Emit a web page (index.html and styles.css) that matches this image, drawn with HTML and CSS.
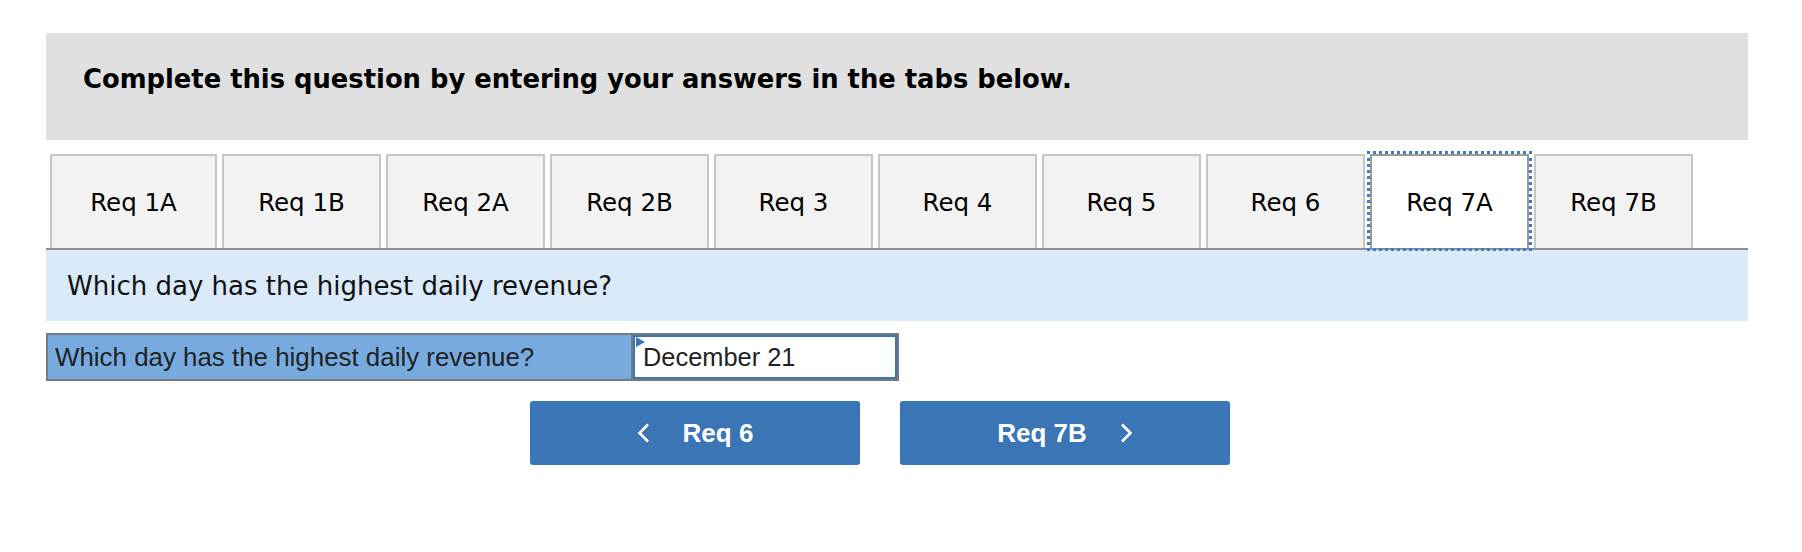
FILE: index.html
```html
<!DOCTYPE html>
<html lang="en">
<head>
    <meta charset="UTF-8">
    <meta name="viewport" content="width=device-width, initial-scale=1.0">
    <title>Req 7A</title>
    <link rel="stylesheet" href="styles.css">
</head>
<body>
    <div class="question-wrap">
        <div class="instructions">
            <strong>Complete this question by entering your answers in the tabs below.</strong>
        </div>

        <div class="tabs" role="tablist">
            <button class="tab" role="tab">Req 1A</button>
            <button class="tab" role="tab">Req 1B</button>
            <button class="tab" role="tab">Req 2A</button>
            <button class="tab" role="tab">Req 2B</button>
            <button class="tab" role="tab">Req 3</button>
            <button class="tab" role="tab">Req 4</button>
            <button class="tab" role="tab">Req 5</button>
            <button class="tab" role="tab">Req 6</button>
            <button class="tab active" role="tab" aria-selected="true">Req 7A</button>
            <button class="tab" role="tab">Req 7B</button>
        </div>

        <div class="tab-panel" role="tabpanel">
            <div class="prompt">Which day has the highest daily revenue?</div>

            <div class="answer-row">
                <div class="answer-label">Which day has the highest daily revenue?</div>
                <div class="answer-cell">December 21</div>
            </div>

            <div class="nav-buttons">
                <button class="nav-btn" aria-label="Go to Req 6">
                    <svg class="chevron" width="13" height="20" viewBox="0 0 13 20">
                        <polyline points="11,1.5 2.5,10 11,18.5" />
                    </svg>
                    <span>Req 6</span>
                </button>
                <button class="nav-btn" aria-label="Go to Req 7B">
                    <span>Req 7B</span>
                    <svg class="chevron" width="13" height="20" viewBox="0 0 13 20">
                        <polyline points="2,1.5 10.5,10 2,18.5" />
                    </svg>
                </button>
            </div>
        </div>
    </div>
</body>
</html>
```

FILE: styles.css
```css
:root {
    --header-gray: #e0e0e0;
    --tab-bg: #f2f2f2;
    --tab-border: #c6c6c6;
    --rule-color: #8f8f8f;
    --panel-blue: #daeaf8;
    --label-blue: #77abe0;
    --button-blue: #3a75b6;
    --focus-blue: #3b7bc8;
}

body {
    margin: 0;
    padding: 0;
    background-color: white;
    color: #000;
    font-family: 'DejaVu Sans', Verdana, sans-serif;
}

.question-wrap {
    width: 1702px;
    margin: 33px 0 0 46px;
}

.instructions {
    height: 107px;
    box-sizing: border-box;
    padding: 31px 37px 0;
    background-color: var(--header-gray);
    font-size: 25.8px;
}

.tabs {
    display: flex;
    gap: 5px;
    margin-top: 14px;
    padding-left: 4px;
    border-bottom: 2px solid var(--rule-color);
}

.tab {
    width: 159px;
    height: 94px;
    box-sizing: border-box;
    border: 2px solid var(--tab-border);
    border-bottom: none;
    background-color: var(--tab-bg);
    font-family: inherit;
    font-size: 24.5px;
    color: #000;
    padding: 0;
    cursor: pointer;
}

.tab:first-child {
    width: 167px;
}

.tab.active {
    background-color: white;
    border-color: #9a9a9a;
    outline: 3px dotted var(--focus-blue);
    outline-offset: 0;
}

.prompt {
    display: flex;
    align-items: center;
    height: 71px;
    padding-left: 21px;
    background-color: var(--panel-blue);
    font-size: 26px;
    color: #111;
}

.answer-row {
    display: flex;
    width: 853px;
    height: 48px;
    box-sizing: border-box;
    margin-top: 12px;
    border: 2px solid #7a7a7a;
    font-family: 'Liberation Sans', Arial, sans-serif;
    font-size: 25.9px;
    color: #222;
}

.answer-label {
    display: flex;
    align-items: center;
    width: 585px;
    padding-left: 7px;
    box-sizing: border-box;
    background-color: var(--label-blue);
    border-right: 2px solid #7a7a7a;
}

.answer-cell {
    position: relative;
    flex: 1;
    display: flex;
    align-items: center;
    padding-left: 8px;
    border: 2px solid var(--button-blue);
    background-color: white;
    font-size: 25.4px;
}

/* little marker in the corner of an answered cell */
.answer-cell::before {
    content: '';
    position: absolute;
    top: 0;
    left: 1px;
    border-left: 9px solid var(--button-blue);
    border-top: 5px solid transparent;
    border-bottom: 5px solid transparent;
}

.nav-buttons {
    display: flex;
    gap: 40px;
    margin-top: 20px;
    padding-left: 484px;
}

.nav-btn {
    display: flex;
    align-items: center;
    justify-content: center;
    gap: 33px;
    width: 330px;
    height: 64px;
    border: none;
    border-radius: 3px;
    background-color: var(--button-blue);
    color: white;
    font-family: 'Liberation Sans', Arial, sans-serif;
    font-size: 26px;
    font-weight: bold;
    cursor: pointer;
}

.chevron polyline {
    fill: none;
    stroke: white;
    stroke-width: 2.6;
}
```
